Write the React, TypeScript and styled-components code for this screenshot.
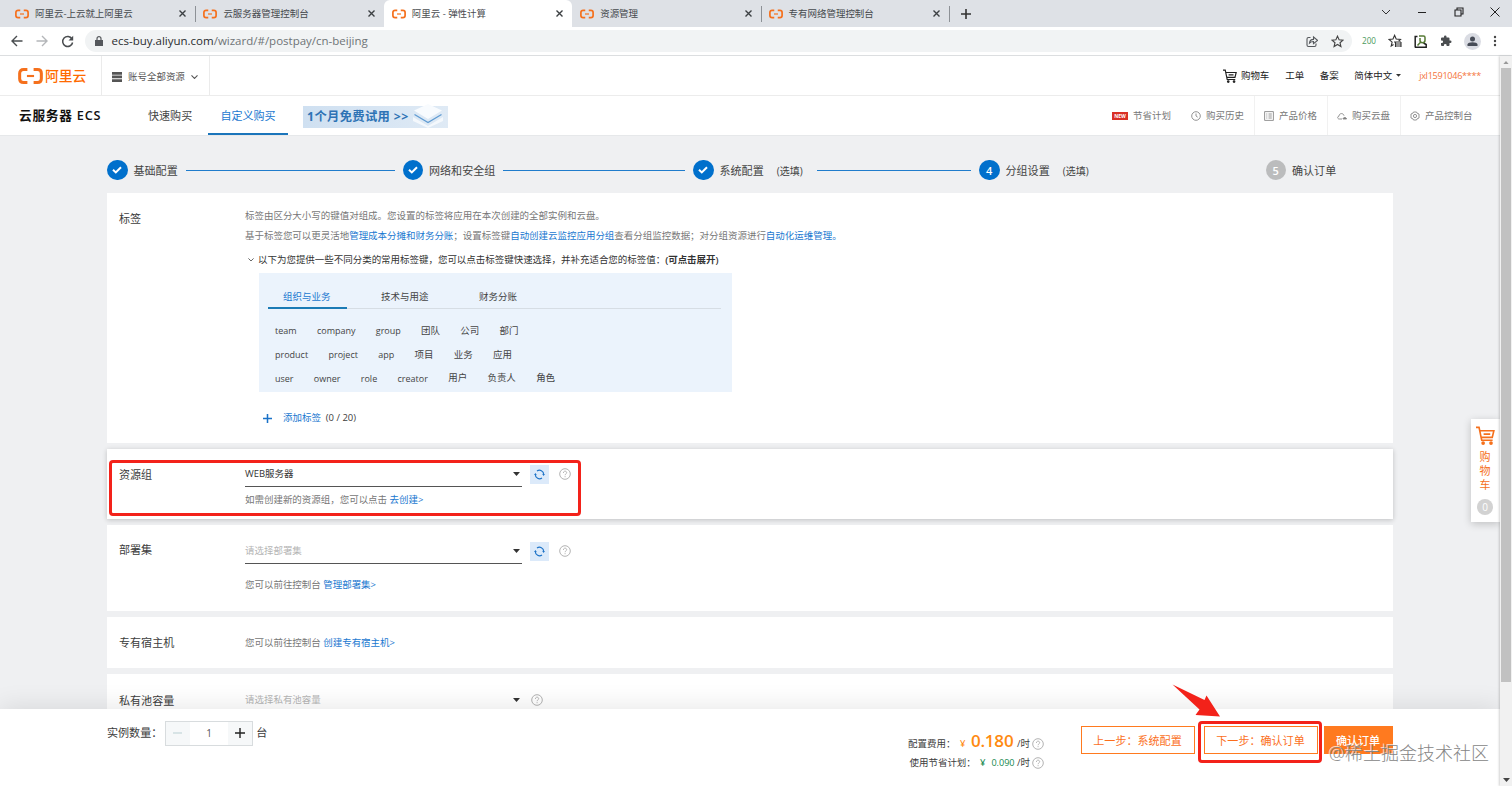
import React from 'react';
import styled, { createGlobalStyle } from 'styled-components';

const GlobalStyle = createGlobalStyle`
  * { box-sizing: border-box; }
  body {
    margin: 0;
    overflow: hidden;
    font-family: "Open Sans", "Noto Sans CJK SC", sans-serif;
    font-size: 9.47px;
    line-height: 1;
    color: #3c3c3c;
  }
  svg { display: block; flex: none; }
`;

const ORANGE = '#f5701c';
const BLUE = '#0070cc';
const LINK = '#1a78d0';

/* ---------- browser chrome ---------- */

const Browser = styled.div`
  position: relative;
  display: flex;
  flex-direction: column;
  width: 1512px;
  height: 786px;
  overflow: hidden;
  background: #fff;
`;

const TabStrip = styled.div`
  display: flex;
  height: 27px;
  padding-left: 7px;
  background: #dee1e6;
`;

const Tab = styled.div<{ $active?: boolean; $line?: boolean }>`
  display: flex;
  align-items: center;
  width: 188.4px;
  padding: 0 7px 0 8px;
  border-radius: 6px 6px 0 0;
  background: ${p => (p.$active ? '#fff' : 'transparent')};
  color: ${p => (p.$active ? '#4a4d51' : '#45494d')};
  &::after {
    content: '';
    width: 1px;
    height: 16px;
    margin-right: -8px;
    margin-left: 9px;
    background: ${p => (p.$line ? '#8d9196' : 'transparent')};
  }
`;

const TabTitle = styled.span`
  flex: 1;
  margin-left: 6px;
  white-space: pre;
`;

const NewTab = styled.div`
  display: flex;
  align-items: center;
  margin-left: 12px;
`;

const WindowButtons = styled.div`
  display: flex;
  gap: 24px;
  height: 23px;
  margin-left: auto;
  padding-right: 12px;
  align-items: center;
`;

const WindowSpacer = styled.i`
  width: 2.3px;
  margin: 0 -12px;
`;

const Toolbar = styled.div`
  display: flex;
  align-items: center;
  height: 29px;
  padding-left: 11px;
  border-bottom: 1px solid #dcdee0;
  background: #fff;
`;

const NavButtons = styled.div`
  display: flex;
  gap: 13px;
  width: 74px;
`;

const Omnibox = styled.div`
  display: flex;
  align-items: center;
  width: 1267px;
  height: 22px;
  padding: 0 8px 0 10px;
  border-radius: 11px;
  background: #f1f3f4;
`;

const Url = styled.span`
  flex: 1;
  margin-left: 8.5px;
  color: #6f7377;
  font-size: 11.5px;
  b { color: #2a2d30; font-weight: 400; }
`;

const BoxIcons = styled.div`
  display: flex;
  gap: 13px;
`;

const Extensions = styled.div`
  display: flex;
  align-items: center;
  flex: 1;
  justify-content: space-between;
  padding: 0 15px 0 10px;
`;

const Counter = styled.span`
  color: #4b9a5c;
  font-size: 8.2px;
`;

/* ---------- page frame ---------- */

const Viewport = styled.div`
  display: flex;
  flex: 1;
  min-height: 0;
`;

const Page = styled.div`
  display: flex;
  flex-direction: column;
  width: 1500px;
  background: #eff0f2;
`;

const Scrollbar = styled.div`
  display: flex;
  flex-direction: column;
  align-items: center;
  justify-content: space-between;
  width: 12px;
  padding: 5px 0 4px;
  background: #f1f1f1;
  box-shadow: -1px 0 2px rgba(0, 0, 0, 0.18);
  z-index: 3;
`;

const Thumb = styled.div`
  width: 10px;
  height: 614px;
  margin: 4px 0 auto;
  background: #c1c1c1;
`;

const TopBar = styled.div`
  display: flex;
  align-items: center;
  height: 40px;
  border-bottom: 1px solid #ececec;
  background: #fff;
`;

const LogoCell = styled.div`
  display: flex;
  align-items: center;
  gap: 2px;
  width: 102px;
  height: 100%;
  padding-left: 18px;
  border-right: 1px solid #ebebeb;
`;

const LogoText = styled.span`
  color: #ff6a00;
  font-size: 13.8px;
  font-weight: 500;
`;

const ResourceCell = styled.div`
  display: flex;
  align-items: center;
  gap: 6px;
  width: 108px;
  height: 100%;
  padding: 3px 0 0 10px;
  border-right: 1px solid #ebebeb;
  color: #555;
`;

const TopLinks = styled.div`
  display: flex;
  align-items: center;
  margin-left: auto;
  padding-right: 19px;
  color: #222;
`;

const TopLink = styled.span<{ $gap: number }>`
  display: flex;
  align-items: center;
  gap: 4px;
  margin-left: ${p => p.$gap}px;
`;

const Account = styled(TopLink)`
  color: #f4743b;
  font-size: 9.1px;
  letter-spacing: -0.28px;
`;

const ProductBar = styled.div`
  display: flex;
  height: 40px;
  border-bottom: 1px solid #e6e8ea;
  background: #fff;
`;

const ProductName = styled.h1`
  width: 129px;
  margin: 0;
  padding-left: 19px;
  color: #111;
  font-size: 12.7px;
  font-weight: 600;
  line-height: 39px;
  letter-spacing: 0.75px;
  white-space: nowrap;
`;

const BuyTab = styled.div<{ $active?: boolean }>`
  width: ${p => (p.$active ? 80 : 79)}px;
  height: 39px;
  line-height: 40px;
  text-align: ${p => (p.$active ? 'center' : 'left')};
  padding-left: ${p => (p.$active ? 0 : 19)}px;
  font-size: 11.05px;
  color: ${p => (p.$active ? LINK : '#444')};
  box-shadow: ${p => (p.$active ? 'inset 0 -2px 0 #1b75bb' : 'none')};
`;

const TrialBanner = styled.div`
  display: flex;
  align-items: center;
  width: 145px;
  height: 22px;
  margin: 10px 0 0 15px;
  padding-left: 4px;
  background: linear-gradient(90deg, #cfe0f1, #dfeaf5);
  color: #2e73b5;
  font-size: 12.3px;
  font-weight: 700;
  letter-spacing: 0.35px;
  white-space: nowrap;
  svg { margin: -3px 0 0 4px; }
`;

const Tools = styled.div`
  display: flex;
  align-items: center;
  margin-left: auto;
  padding-right: 19px;
  color: #777;
`;

const Tool = styled.div<{ $width: number; $line?: boolean }>`
  display: flex;
  align-items: center;
  width: ${p => p.$width}px;
  height: 39px;
  padding-left: 9px;
  border-left: 1px solid ${p => (p.$line ? '#f1f1f1' : 'transparent')};
  white-space: nowrap;
  span { margin-left: 5px; }
`;

const NewBadge = styled.b`
  width: 16px;
  height: 8px;
  background: #d93026;
  color: #fff;
  font-size: 5px;
  line-height: 8px;
  text-align: center;
`;

/* ---------- wizard steps ---------- */

const Steps = styled.div`
  display: flex;
  align-items: center;
  height: 57px;
  padding: 11px 0 0 107px;
  color: #444;
  font-size: 11.05px;
`;

const Step = styled.div<{ $width: number }>`
  display: flex;
  align-items: center;
  width: ${p => p.$width}px;
  white-space: nowrap;
`;

const StepDot = styled.div<{ $off?: boolean }>`
  display: flex;
  align-items: center;
  justify-content: center;
  width: 20.5px;
  height: 20.5px;
  margin-right: 6px;
  border-radius: 50%;
  background: ${p => (p.$off ? '#bbbcbd' : BLUE)};
  color: #fff;
  font-size: 11px;
  font-weight: 600;
`;

const StepName = styled.span`
  margin-top: 1px;
`;

const StepNote = styled.span`
  margin: 1px 0 0 13px;
  font-size: 10px;
`;

const StepLine = styled.div<{ $left: number; $right: number }>`
  flex: 1;
  height: 1px;
  margin: 1px ${p => p.$right}px 0 ${p => p.$left}px;
  background: #1f7ccc;
`;

/* ---------- cards ---------- */

const Cards = styled.div`
  display: flex;
  flex-direction: column;
  gap: 6px;
  width: 1286px;
  margin-left: 107px;
`;

const Card = styled.section<{ $height: number; $top: number; $raised?: boolean }>`
  display: flex;
  height: ${p => p.$height}px;
  padding: ${p => p.$top}px 0 0 12px;
  background: #fff;
  box-shadow: ${p => (p.$raised ? '0 1px 5px rgba(0,0,0,.2)' : 'none')};
`;

const CardLabel = styled.div<{ $offset?: number }>`
  width: 126px;
  height: 16px;
  margin-top: ${p => p.$offset || 0}px;
  font-size: 11.05px;
  line-height: 16px;
`;

const CardBody = styled.div`
  display: flex;
  flex-direction: column;
`;

const Line = styled.p<{ $height: number; $tone?: string }>`
  display: flex;
  align-items: center;
  height: ${p => p.$height}px;
  margin: 0;
  color: ${p => p.$tone || '#777'};
  white-space: pre;
  b { font-weight: 600; }
`;

const Link = styled.a`
  color: ${LINK};
`;

const Helper = styled(Line)<{ $gap: number }>`
  margin-top: ${p => p.$gap}px;
`;

const ToggleIcon = styled.span`
  width: 13px;
  padding-left: 3px;
`;

const TagPanel = styled.div`
  width: 473px;
  height: 119px;
  margin: -1px 0 0 14px;
  padding: 11px 11px 0 9px;
  background: #ebf3fc;
`;

const TagTabs = styled.div`
  display: flex;
  gap: 19px;
  height: 25px;
  border-bottom: 1px solid #d6dde4;
`;

const TagTab = styled.div<{ $active?: boolean }>`
  width: 79px;
  height: 25px;
  padding-left: 15px;
  color: ${p => (p.$active ? LINK : '#444')};
  line-height: 26px;
  border-bottom: 2px solid ${p => (p.$active ? '#1b7bb5' : 'transparent')};
`;

const TagRows = styled.div`
  padding: 10px 0 0 7px;
`;

const TagRow = styled.div`
  display: flex;
  align-items: center;
  gap: 20.3px;
  height: 23.7px;
  color: #444;
`;

const Tag = styled.span<{ $latin: boolean }>`
  font-size: ${p => (p.$latin ? 9 : 9.47)}px;
`;

const AddTag = styled.div`
  display: flex;
  align-items: center;
  height: 20px;
  margin: 16px 0 0 18px;
  white-space: pre;
  svg { margin-right: 11px; }
`;

const SelectRow = styled.div`
  display: flex;
  align-items: center;
`;

const Select = styled.div<{ $empty?: boolean }>`
  display: flex;
  align-items: center;
  justify-content: space-between;
  width: 276.5px;
  height: 25px;
  padding-right: 1.5px;
  border-bottom: 1px solid #555;
  color: ${p => (p.$empty ? '#b5b5b5' : '#333')};
`;

const Refresh = styled.div`
  display: flex;
  align-items: center;
  justify-content: center;
  width: 19px;
  height: 19px;
  margin: -1px 9.5px 0 8.5px;
  background: #dceafa;
`;

const HelpSlot = styled.span<{ $left?: number }>`
  margin: -1px 0 0 ${p => p.$left || 0}px;
`;

/* ---------- order footer ---------- */

const Footer = styled.footer`
  position: absolute;
  left: 0;
  bottom: 0;
  z-index: 2;
  display: flex;
  width: 1500px;
  height: 77px;
  padding-left: 107px;
  background: #fff;
  box-shadow: 0 -2px 26px rgba(0, 0, 0, 0.1);
`;

const Quantity = styled.div`
  display: flex;
  align-items: center;
  height: 26px;
  width: 800px;
  margin-top: 11px;
  font-size: 11.05px;
`;

const Stepper = styled.div`
  display: flex;
  width: 88.5px;
  height: 25px;
  margin: 0 3px 0 2.5px;
  border: 1px solid #d8dcde;
`;

const StepperCell = styled.div<{ $field?: boolean }>`
  display: flex;
  align-items: center;
  justify-content: center;
  flex: ${p => (p.$field ? '1' : '0 0 24px')};
  background: ${p => (p.$field ? '#fff' : '#f6f8f9')};
  font-size: 10px;
  color: #555;
`;

const Costs = styled.div`
  display: flex;
  flex-direction: column;
  width: 174px;
  padding-top: 21px;
`;

const CostRow = styled.div<{ $height: number; $left: number }>`
  display: flex;
  align-items: center;
  height: ${p => p.$height}px;
  padding-left: ${p => p.$left}px;
  white-space: pre;
`;

const CostLabel = styled.span<{ $width: number }>`
  width: ${p => p.$width}px;
`;

const Price = styled.span<{ $big?: boolean }>`
  display: flex;
  align-items: center;
  width: ${p => (p.$big ? 57 : 37)}px;
  color: ${p => (p.$big ? '#ff8a10' : '#168a50')};
  gap: 4px;
  b {
    font-size: ${p => (p.$big ? 17 : 9.1)}px;
    font-weight: ${p => (p.$big ? 600 : 400)};
    letter-spacing: ${p => (p.$big ? '-0.2px' : 0)};
    margin-top: ${p => (p.$big ? -6 : 0)}px;
    margin-left: ${p => (p.$big ? -1 : -0.5)}px;
  }
`;

const Unit = styled.span`
  width: 15px;
`;

const Actions = styled.div`
  display: flex;
  padding-top: 17px;
`;

const Button = styled.div<{ $width: number; $gap: number; $solid?: boolean }>`
  width: ${p => p.$width}px;
  height: 28px;
  margin-right: ${p => p.$gap}px;
  border: 1px solid #ff7a1f;
  background: ${p => (p.$solid ? '#ff7a1f' : '#fff')};
  color: ${p => (p.$solid ? '#fff' : '#fb6f1c')};
  font-size: 11.05px;
  line-height: 27px;
  text-align: center;
  text-indent: -1px;
  font-weight: ${p => (p.$solid ? 500 : 400)};
`;

/* ---------- floating layers ---------- */

const CartTab = styled.div`
  position: absolute;
  top: 419px;
  left: 1471px;
  z-index: 2;
  display: flex;
  flex-direction: column;
  align-items: center;
  width: 29px;
  height: 103px;
  padding: 7px 1px 0 0;
  background: #fff;
  color: ${ORANGE};
  font-size: 11px;
  line-height: 14.2px;
  box-shadow: 0 2px 8px rgba(0, 0, 0, 0.2);
  svg { margin-bottom: 5px; }
`;

const CartCount = styled.span`
  width: 16px;
  height: 16px;
  margin-top: 6px;
  border-radius: 50%;
  background: #d2d2d2;
  color: #fff;
  font-size: 10px;
  line-height: 16px;
  text-align: center;
`;

const Marker = styled.div<{ $x: number; $y: number; $w: number; $h: number }>`
  position: absolute;
  z-index: 4;
  left: ${p => p.$x}px;
  top: ${p => p.$y}px;
  width: ${p => p.$w}px;
  height: ${p => p.$h}px;
  border: 3px solid #f3221a;
  border-radius: 4px;
`;

const ArrowLayer = styled.div`
  position: absolute;
  z-index: 4;
  left: 1170px;
  top: 683px;
`;

const Watermark = styled.div`
  position: absolute;
  z-index: 4;
  left: 1329px;
  top: 742px;
  color: #858585;
  font-size: 18px;
  line-height: 22px;
  font-weight: 300;
  white-space: nowrap;
  text-shadow: -1px -1px 0 rgba(255, 255, 255, 0.8);
`;

/* ---------- icons ---------- */

const Brand = ({ w = 14, h = 10 }: { w?: number; h?: number }) => (
  <svg width={w} height={h} viewBox="0 0 28 18" fill="none" stroke="#f5701c" strokeWidth="3.4">
    <path d="M10.5 1.8H6.2C3.4 1.8 1.8 3.4 1.8 6v6c0 2.6 1.6 4.2 4.4 4.2h4.3" />
    <path d="M17.5 1.8h4.3c2.8 0 4.4 1.6 4.4 4.2v6c0 2.6-1.6 4.2-4.4 4.2h-4.3" />
    <path d="M10 9h8" strokeWidth="2.4" />
  </svg>
);

const Cross = ({ s = 7, c = '#3c4043', sw = 1.4 }: { s?: number; c?: string; sw?: number }) => (
  <svg width={s} height={s} viewBox={`0 0 ${s} ${s}`} stroke={c} strokeWidth={sw}>
    <path d={`M.5 .5L${s - 0.5} ${s - 0.5}M${s - 0.5} .5L.5 ${s - 0.5}`} />
  </svg>
);

const Plus = ({ s, c, sw = 1.5 }: { s: number; c: string; sw?: number }) => (
  <svg width={s} height={s} viewBox="0 0 10 10" stroke={c} strokeWidth={sw}>
    <path d="M5 0v10M0 5h10" />
  </svg>
);

const Chevron = ({ w = 7, c = '#555' }: { w?: number; c?: string }) => (
  <svg width={w} height={w * 0.6} viewBox="0 0 10 6" fill="none" stroke={c} strokeWidth="1.5">
    <path d="M.7 .7L5 5L9.3 .7" />
  </svg>
);

const Caret = ({ w = 7, c = '#333', up }: { w?: number; c?: string; up?: boolean }) => (
  <svg width={w} height={w * 0.57} viewBox="0 0 8 4.6" fill={c}>
    <path d={up ? 'M0 4.6h8L4 0z' : 'M0 0h8L4 4.6z'} />
  </svg>
);

const Help = () => (
  <svg width="12" height="12" viewBox="0 0 12 12" fill="none" stroke="#aaa" strokeWidth=".9">
    <circle cx="6" cy="6" r="5.3" />
    <path d="M4.4 4.9c0-2.3 3.3-2.2 3.3-.2 0 1.1-1.6 1.2-1.6 2.5M6.1 8.2v1" />
  </svg>
);

const Check = () => (
  <svg width="10" height="8" viewBox="0 0 10 8" fill="none" stroke="#fff" strokeWidth="2">
    <path d="M1 3.7l2.8 2.7L9 1.2" />
  </svg>
);

const RefreshIcon = () => (
  <svg width="11" height="11" viewBox="0 0 11 11" fill="none" stroke="#1f74c8" strokeWidth="1.2">
    <path d="M3 2.1A4.200 4.200 0 0 1 9.700 5.500M8 8.900A4.200 4.200 0 0 1 1.300 5.500" />
    <path d="M8.200 5h2.700L9.600 7zM.1 6h2.700L1.400 4z" fill="#1f74c8" stroke="none" />
  </svg>
);

const Cart = ({ s, c }: { s: number; c: string }) => (
  <svg width={s} height={s} viewBox="0 0 20 20" fill="none" stroke={c} strokeWidth="1.7">
    <path d="M0 1.500h3.200L6 15h11.500M4 5h14.800l-1.700 7H5.600M8 8.500h7" />
    <circle cx="7.5" cy="18" r="1.100" fill={c} />
    <circle cx="15.8" cy="18" r="1.100" fill={c} />
  </svg>
);

function ToolIcon({ children }: { children: React.ReactNode }) {
  return <svg width="10" height="10" viewBox="0 0 10 10" fill="none" stroke="#888" strokeWidth=".9">{children}</svg>;
}

const STAR = 'M7 1.200l1.700 3.900 4.200.4-3.200 2.800 1 4.100L7 10.200l-3.700 2.200 1-4.100L1.100 5.500l4.200-.4z';

const tabs = ['阿里云-上云就上阿里云', '云服务器管理控制台', '阿里云 - 弹性计算', '资源管理', '专有网络管理控制台'];

const tagRows = [
  ['team', 'company', 'group', '团队', '公司', '部门'],
  ['product', 'project', 'app', '项目', '业务', '应用'],
  ['user', 'owner', 'role', 'creator', '用户', '负责人', '角色'],
];

function Chrome() {
  return (
    <>
      <TabStrip>
        {tabs.map((t, i) => (
          <Tab key={t} $active={i === 2} $line={i !== 1 && i !== 2}>
            <Brand />
            <TabTitle>{t}</TabTitle>
            <Cross />
          </Tab>
        ))}
        <NewTab><Plus s={10} c="#333" sw={1.6} /></NewTab>
        <WindowButtons>
          <svg width="10" height="10" viewBox="0 0 10 10" fill="none" stroke="#333"><path d="M1 3l4 4 4-4" /></svg>
          <WindowSpacer />
          <svg width="10" height="10" viewBox="0 0 10 10" stroke="#222"><path d="M1 5.500h8" /></svg>
          <WindowSpacer />
          <svg width="10" height="10" viewBox="0 0 10 10" fill="none" stroke="#222" strokeWidth="1.1"><path d="M1 3h6v6H1zM3 3V1h6v6H7" /></svg>
          <WindowSpacer />
          <Cross s={10} c="#222" sw={1} />
        </WindowButtons>
      </TabStrip>
      <Toolbar>
        <NavButtons>
          <svg width="12" height="12" viewBox="0 0 12 12" fill="none" stroke="#4a4d50" strokeWidth="1.4"><path d="M11.500 6H1.200M6 1L1 6l5 5" /></svg>
          <svg width="12" height="12" viewBox="0 0 12 12" fill="none" stroke="#b4b6b9" strokeWidth="1.4"><path d="M.5 6h10.300M6 1l5 5-5 5" /></svg>
          <svg width="13" height="13" viewBox="0 0 13 13" fill="none" stroke="#4a4d50" strokeWidth="1.5"><path d="M11 4A5 5 0 1 0 11.600 7.500" /><path d="M12.200 .8v4.700H7.500z" fill="#4a4d50" stroke="none" /></svg>
        </NavButtons>
        <Omnibox>
          <svg width="8" height="10" viewBox="0 0 8 10"><path d="M0 4h8v6H0z" fill="#55585c" /><path d="M2 4.500V2.700a2 2 0 0 1 4 0v1.800" fill="none" stroke="#55585c" strokeWidth="1.2" /></svg>
          <Url><b>ecs-buy.aliyun.com</b>/wizard/#/postpay/cn-beijing</Url>
          <BoxIcons>
            <svg width="12" height="13" viewBox="0 0 12 13" fill="none" stroke="#55585c" strokeWidth="1.1"><path d="M4.500 2.500H2.500a1.500 1.500 0 0 0-1.500 1.500v6a1.500 1.500 0 0 0 1.500 1.500h6A1.500 1.500 0 0 0 10 10V8.500" /><path d="M3.500 8c.3-2.500 1.500-3.500 4-3.600V2l4 3.400-4 3.300V6.500C5.500 6.500 4.500 7 3.500 8z" /></svg>
            <svg width="13" height="13" viewBox="0 0 14 14" fill="none" stroke="#444" strokeWidth="1.2"><path d={STAR} /></svg>
          </BoxIcons>
        </Omnibox>
        <Extensions>
          <Counter>200</Counter>
          <svg width="14" height="14" viewBox="0 0 14 14" fill="none" stroke="#333" strokeWidth="1.1"><path d="M5.500 10.500L3.200 12l.9-3.900L1 5.400l4-.4L6.600 1.300 8.200 5l4.300.4-1.800 1.600M6 8h7M8 10h5M8 12h5M7.500 8v5M13 8v5" /></svg>
          <svg width="13" height="13" viewBox="0 0 13 13" fill="none" stroke="#222" strokeWidth="1.2"><path d="M3.500 1.600H1.200v10.600M.8 12.200h11.400V9.500L9.500 8" strokeWidth="1.500" /><path d="M5 1h4.500a1.500 1.500 0 0 1 1.500 1.500v2.700a2.500 2.500 0 0 1-5 0V3M6.500 7.200L3.500 10.500" stroke="#567a35" strokeWidth="1.500" /></svg>
          <svg width="12" height="12" viewBox="0 0 24 24" fill="#4a4d50"><path d="M20.500 11H19V7a2 2 0 0 0-2-2h-4V3.500a2.500 2.500 0 0 0-5 0V5H4a2 2 0 0 0-2 2v3.800h1.500a2.700 2.700 0 0 1 0 5.400H2V20a2 2 0 0 0 2 2h3.800v-1.500a2.700 2.700 0 0 1 5.400 0V22H17a2 2 0 0 0 2-2v-4h1.500a2.500 2.500 0 0 0 0-5z" /></svg>
          <svg width="17" height="17" viewBox="0 0 17 17"><circle cx="8.5" cy="8.5" r="8.5" fill="#dadce3" /><circle cx="8.5" cy="6" r="2.5" fill="#474c57" /><path d="M3.500 13v-1.500c0-3 10-3 10 0V13z" fill="#474c57" /></svg>
          <svg width="4" height="12" viewBox="0 0 4 12" fill="#444"><circle cx="2" cy="2" r="1.2" /><circle cx="2" cy="6" r="1.2" /><circle cx="2" cy="10" r="1.2" /></svg>
        </Extensions>
      </Toolbar>
    </>
  );
}

function Header() {
  return (
    <>
      <TopBar>
        <LogoCell>
          <Brand w={25} h={16} />
          <LogoText>阿里云</LogoText>
        </LogoCell>
        <ResourceCell>
          <svg width="10" height="10" viewBox="0 0 10 10" fill="#555"><path d="M0 0h10v2.700H0zM0 3.600h10v2.700H0zM0 7.200h10V10H0z" /></svg>
          账号全部资源
          <Chevron />
        </ResourceCell>
        <TopLinks>
          <TopLink $gap={0}><Cart s={14} c="#222" />购物车</TopLink>
          <TopLink $gap={16}>工单</TopLink>
          <TopLink $gap={15.5}>备案</TopLink>
          <TopLink $gap={15.5}>简体中文<Caret w={5} /></TopLink>
          <Account $gap={18}>jxl1591046****</Account>
        </TopLinks>
      </TopBar>
      <ProductBar>
        <ProductName>云服务器 ECS</ProductName>
        <BuyTab>快速购买</BuyTab>
        <BuyTab $active>自定义购买</BuyTab>
        <TrialBanner>
          1个月免费试用 &gt;&gt;
          <svg width="30" height="24" viewBox="0 0 30 24" fill="none">
            <path d="M0 13l15 9 15-9v4l-15 7-15-7z" fill="#f4f8fc" />
            <path d="M1 6.500L15 0l14 6.500L15 15z" fill="#f8fbfe" />
            <path d="M1.500 10.500L15 18.500l13.500-8" stroke="#5f9bd2" strokeWidth="1.3" />
          </svg>
        </TrialBanner>
        <Tools>
          <Tool $width={79}><NewBadge>NEW</NewBadge><span>节省计划</span></Tool>
          <Tool $width={73}><ToolIcon><circle cx="5" cy="5" r="4.3" /><path d="M5 2.500V5l1.700 1.200" /></ToolIcon><span>购买历史</span></Tool>
          <Tool $width={73} $line><ToolIcon><path d="M.6 .6h8.800v8.800H.6zM2.300 3h1M4.500 3h3.300M2.300 5h1M4.500 5h3.300M2.300 7h1M4.500 7h3.300" /></ToolIcon><span>产品价格</span></Tool>
          <Tool $width={73} $line><ToolIcon><path d="M5 8H2.200C.2 8 .2 5.300 2 5.200 2 1.900 6.500 1.700 7 4.700" /><path d="M6 8c0-2 3.500-2 3.500 0z" fill="#777" /></ToolIcon><span>购买云盘</span></Tool>
          <Tool $width={81} $line><ToolIcon><path d="M3.500 1h3l.6 1.200L9 3v4l-1.900.8L6.500 9h-3l-.6-1.200L1 7V3l1.900-.8z" /><circle cx="5" cy="5" r="1.6" /></ToolIcon><span>产品控制台</span></Tool>
        </Tools>
      </ProductBar>
    </>
  );
}

function StepBar() {
  return (
    <Steps>
      <Step $width={295.5}><StepDot><Check /></StepDot><StepName>基础配置</StepName><StepLine $left={8} $right={7.5} /></Step>
      <Step $width={290.5}><StepDot><Check /></StepDot><StepName>网络和安全组</StepName><StepLine $left={8} $right={8} /></Step>
      <Step $width={286}><StepDot><Check /></StepDot><StepName>系统配置</StepName><StepNote>(选填)</StepNote><StepLine $left={14.5} $right={8} /></Step>
      <Step $width={286.5}><StepDot>4</StepDot><StepName>分组设置</StepName><StepNote>(选填)</StepNote></Step>
      <Step $width={100}><StepDot $off>5</StepDot><StepName>确认订单</StepName></Step>
    </Steps>
  );
}

export default function App() {
  return (
    <Browser>
      <GlobalStyle />
      <Chrome />
      <Viewport>
        <Page>
          <Header />
          <StepBar />
          <Cards>
            <Card $height={250} $top={13}>
              <CardLabel $offset={5}>标签</CardLabel>
              <CardBody>
                <Line $height={19.5}>标签由区分大小写的键值对组成。您设置的标签将应用在本次创建的全部实例和云盘。</Line>
                <Line $height={19.5}>
                  基于标签您可以更灵活地<Link>管理成本分摊和财务分账</Link>；设置标签键<Link>自动创建云监控应用分组</Link>查看分组监控数据；对分组资源进行<Link>自动化运维管理。</Link>
                </Line>
                <Line $height={29} $tone="#333">
                  <ToggleIcon><Chevron w={6} /></ToggleIcon>以下为您提供一些不同分类的常用标签键，您可以点击标签键快速选择，并补充适合您的标签值：<b>(可点击展开)</b>
                </Line>
                <TagPanel>
                  <TagTabs>
                    <TagTab $active>组织与业务</TagTab>
                    <TagTab>技术与用途</TagTab>
                    <TagTab>财务分账</TagTab>
                  </TagTabs>
                  <TagRows>
                    {tagRows.map(row => (
                      <TagRow key={row[0]}>
                        {row.map(t => <Tag key={t} $latin={/^[a-z]/.test(t)}>{t}</Tag>)}
                      </TagRow>
                    ))}
                  </TagRows>
                </TagPanel>
                <AddTag><Plus s={9} c="#1a72c8" sw={1.7} /><Link>添加标签</Link>{'  (0 / 20)'}</AddTag>
              </CardBody>
            </Card>
            <Card $height={70} $top={13} $raised>
              <CardLabel $offset={5}>资源组</CardLabel>
              <CardBody>
                <SelectRow>
                  <Select>WEB服务器<Caret /></Select>
                  <Refresh><RefreshIcon /></Refresh>
                  <HelpSlot><Help /></HelpSlot>
                </SelectRow>
                <Helper $height={16} $gap={4.5}>如需创建新的资源组，您可以点击 <Link>去创建&gt;</Link></Helper>
              </CardBody>
            </Card>
            <Card $height={86} $top={14}>
              <CardLabel $offset={3}>部署集</CardLabel>
              <CardBody>
                <SelectRow>
                  <Select $empty>请选择部署集<Caret /></Select>
                  <Refresh><RefreshIcon /></Refresh>
                  <HelpSlot><Help /></HelpSlot>
                </SelectRow>
                <Helper $height={16} $gap={13}>您可以前往控制台 <Link>管理部署集&gt;</Link></Helper>
              </CardBody>
            </Card>
            <Card $height={51} $top={18}>
              <CardLabel>专有宿主机</CardLabel>
              <CardBody>
                <Line $height={16}>您可以前往控制台 <Link>创建专有宿主机&gt;</Link></Line>
              </CardBody>
            </Card>
            <Card $height={80} $top={14}>
              <CardLabel $offset={5}>私有池容量</CardLabel>
              <CardBody>
                <SelectRow>
                  <Select $empty>请选择私有池容量<Caret /></Select>
                  <HelpSlot $left={9.5}><Help /></HelpSlot>
                </SelectRow>
              </CardBody>
            </Card>
          </Cards>
        </Page>
        <Scrollbar>
          <Caret w={6} c="#999" up />
          <Thumb />
          <Caret w={7} c="#444" />
        </Scrollbar>
      </Viewport>

      <Footer>
        <Quantity>
          实例数量：
          <Stepper>
            <StepperCell><svg width="9" height="2"><path d="M0 1h9" stroke="#b9cfd2" /></svg></StepperCell>
            <StepperCell $field>1</StepperCell>
            <StepperCell><Plus s={10} c="#222" sw={1.4} /></StepperCell>
          </Stepper>
          台
        </Quantity>
        <Costs>
          <CostRow $height={27} $left={1}>
            <CostLabel $width={52}>配置费用：</CostLabel>
            <Price $big>¥ <b>0.180</b></Price>
            <Unit>/时</Unit>
            <Help />
          </CostRow>
          <CostRow $height={12} $left={2.5}>
            <CostLabel $width={70.5}>使用节省计划：</CostLabel>
            <Price>¥ <b>0.090</b></Price>
            <Unit>/时</Unit>
            <Help />
          </CostRow>
        </Costs>
        <Actions>
          <Button $width={114} $gap={9}>上一步：系统配置</Button>
          <Button $width={114} $gap={6}>下一步：确认订单</Button>
          <Button $width={69} $gap={0} $solid>确认订单</Button>
        </Actions>
      </Footer>

      <CartTab>
        <Cart s={19} c={ORANGE} />
        <span>购</span>
        <span>物</span>
        <span>车</span>
        <CartCount>0</CartCount>
      </CartTab>

      <Marker $x={109} $y={460} $w={472} $h={56} />
      <Marker $x={1198} $y={721} $w={124} $h={42} />
      <ArrowLayer>
        <svg width="52" height="36" viewBox="0 0 52 36" fill="#f3221a">
          <path d="M2.500 1.500L34.500 17l2-4.500L50 33.500 25.500 32l4-5.500z" />
        </svg>
      </ArrowLayer>
      <Watermark>@稀土掘金技术社区</Watermark>
    </Browser>
  );
}
